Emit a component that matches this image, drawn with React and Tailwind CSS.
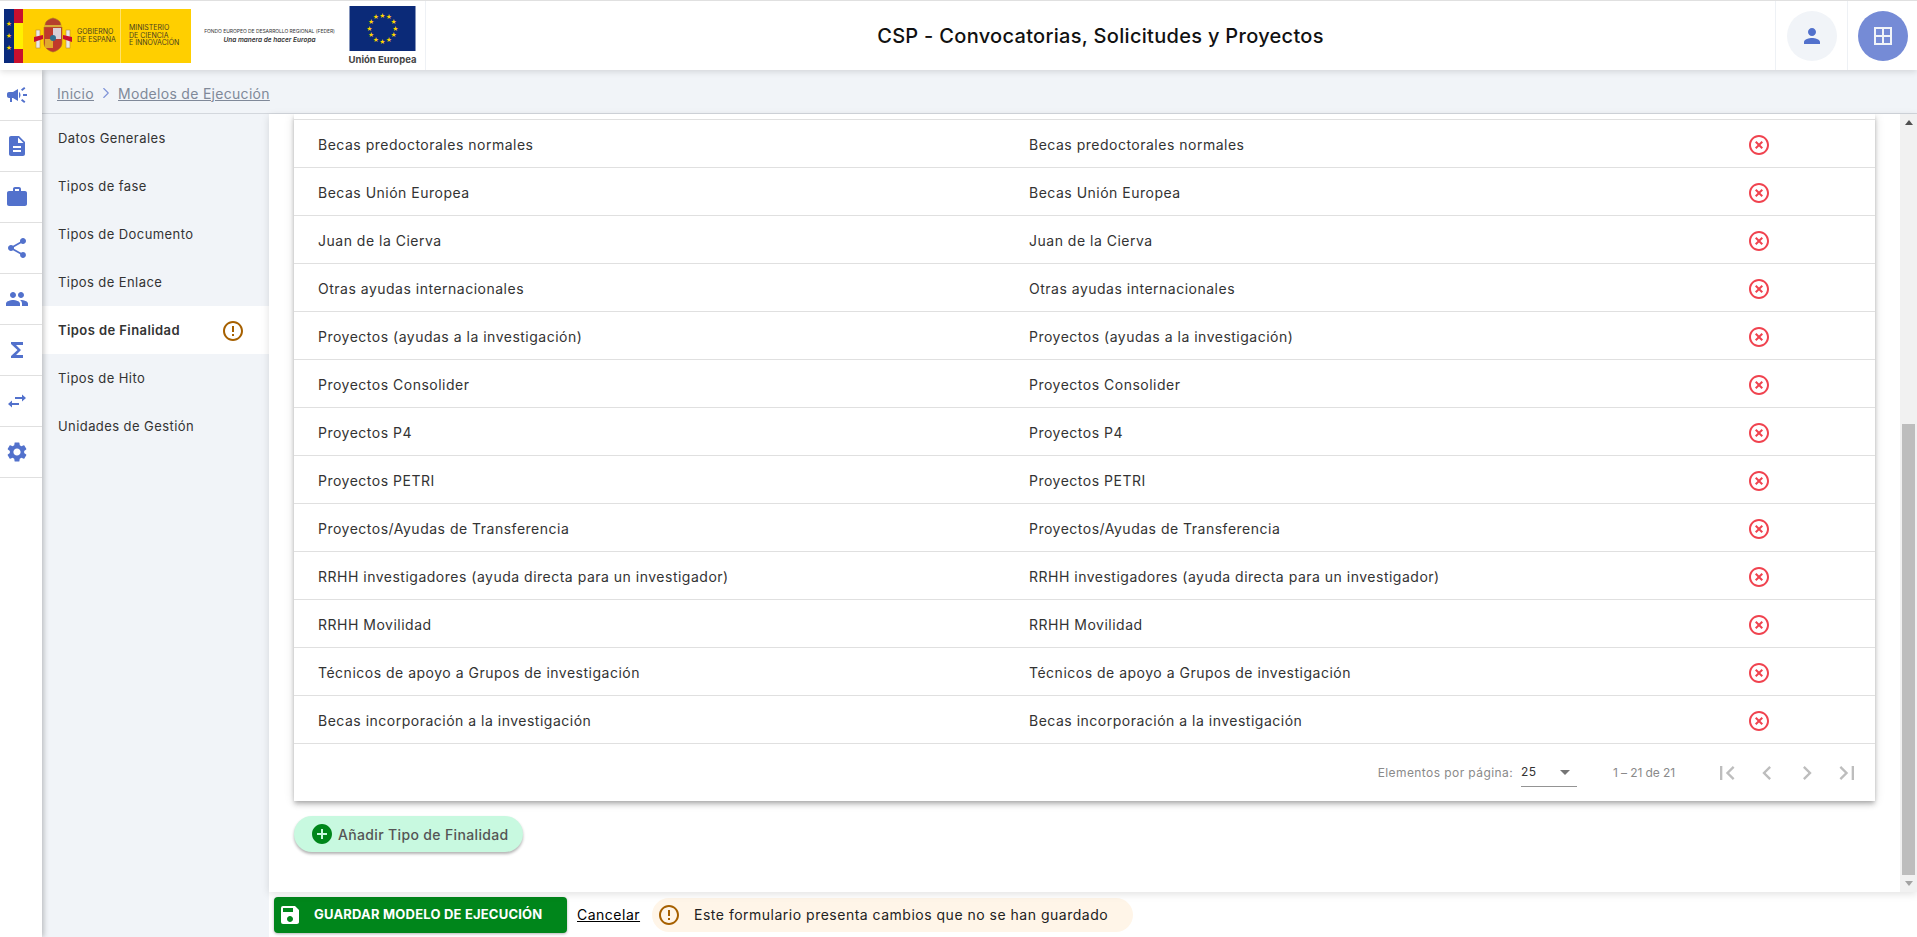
import {
  MdCampaign, MdDescription, MdWork, MdShare, MdPeople, MdFunctions, MdSettings,
  MdPerson, MdBorderAll, MdErrorOutline, MdHighlightOff, MdAddCircle, MdSave,
  MdFirstPage, MdChevronLeft, MdChevronRight, MdLastPage, MdArrowDropDown,
} from 'react-icons/md'
import { LuChevronRight } from 'react-icons/lu'

const SwapIcon = ({ size, className }) => (
  <svg width={size} height={size} viewBox="0 0 24 24" fill="currentColor" className={className}>
    <path d="M10 8h7V5.5L21 9l-4 3.5V10h-7z" />
    <path d="M14 14H7v-2.5L3 15l4 3.5V16h7z" />
  </svg>
)

const railIcons = [MdCampaign, MdDescription, MdWork, MdShare, MdPeople, MdFunctions, SwapIcon, MdSettings]

const subMenu = ['Datos Generales', 'Tipos de fase', 'Tipos de Documento', 'Tipos de Enlace', 'Tipos de Finalidad', 'Tipos de Hito', 'Unidades de Gestión']

const rows = [
  'Becas predoctorales normales',
  'Becas Unión Europea',
  'Juan de la Cierva',
  'Otras ayudas internacionales',
  'Proyectos (ayudas a la investigación)',
  'Proyectos Consolider',
  'Proyectos P4',
  'Proyectos PETRI',
  'Proyectos/Ayudas de Transferencia',
  'RRHH investigadores (ayuda directa para un investigador)',
  'RRHH Movilidad',
  'Técnicos de apoyo a Grupos de investigación',
  'Becas incorporación a la investigación',
]

const euStars = Array.from({ length: 12 }, (_, i) => {
  const a = (i * Math.PI) / 6
  return { x: 33 + 13 * Math.sin(a), y: 22.5 - 13 * Math.cos(a) }
})

const SpainShield = () => (
  <svg width="40" height="38" viewBox="0 0 40 38">
    <rect x="3" y="13" width="4" height="18" fill="#e8e8e8" stroke="#b98a3a" strokeWidth="0.6" />
    <rect x="33" y="13" width="4" height="18" fill="#e8e8e8" stroke="#b98a3a" strokeWidth="0.6" />
    <path d="M1 20 L10 18 L10 22 L1 25 Z M39 20 L30 18 L30 22 L39 25 Z" fill="#c8102e" />
    <path d="M11 10 H29 V26 C29 31 24 34 20 35 C16 34 11 31 11 26 Z" fill="#c0392b" stroke="#a87a2a" strokeWidth="0.6" />
    <rect x="20" y="11" width="8" height="11" fill="#d9cfd6" />
    <rect x="12" y="22" width="8" height="9" fill="#e0a82e" />
    <circle cx="20" cy="21" r="3" fill="#2f6f8f" />
    <path d="M12 9 C12 3 17 2 20 1 C23 2 28 3 28 9 Z" fill="#b5402d" stroke="#a87a2a" strokeWidth="0.6" />
    <rect x="12" y="8" width="16" height="2" fill="#d8a93a" />
  </svg>
)

const Logos = () => (
  <div className="w-[426px] h-full shrink-0 flex items-center border-r border-[#eef1f5]">
    <div className="ml-[4px] w-[187px] h-[54px] flex bg-[#ffcf00]">
      <div className="w-[10px] bg-[#0a2a7c] flex flex-col items-center justify-center gap-[6px] text-[6px] leading-[6px] text-[#ffcf00]">
        <span>★</span><span>★</span><span>★</span>
      </div>
      <div className="w-[9px] flex flex-col">
        <div className="h-[14px] bg-[#c8102e]" />
        <div className="flex-1 bg-[#fff000]" />
        <div className="h-[14px] bg-[#c8102e]" />
      </div>
      <div className="w-[98px] flex items-center border-r border-[#ffe26a]">
        <div className="ml-[10px] w-[40px]"><SpainShield /></div>
        <div className="ml-[4px] text-[7px] leading-[7.5px] text-[#4a4020] whitespace-nowrap">GOBIERNO<br />DE ESPAÑA</div>
      </div>
      <div className="ml-[8px] text-[7px] leading-[7.5px] text-[#4a4020] self-center whitespace-nowrap">MINISTERIO<br />DE CIENCIA<br />E INNOVACIÓN</div>
    </div>
    <div className="ml-[11px] w-[135px] text-center whitespace-nowrap text-[#333]">
      <div className="text-[5px] leading-[9px] tracking-[-0.05px]">FONDO EUROPEO DE DESARROLLO REGIONAL (FEDER)</div>
      <div className="text-[6.5px] leading-[8px] italic font-semibold">Una manera de hacer Europa</div>
    </div>
    <div className="ml-[12px] w-[67px] flex flex-col items-center">
      <svg width="67" height="45" viewBox="0 0 66 45" className="shrink-0">
        <rect width="66" height="45" fill="#0b2a78" />
        {euStars.map((s, i) => (
          <text key={i} x={s.x} y={s.y + 2} textAnchor="middle" fontSize="6" fill="#ffd400">★</text>
        ))}
      </svg>
      <div className="mt-[3px] text-[9.5px] leading-[12px] font-bold text-[#444] whitespace-nowrap">Unión Europea</div>
    </div>
  </div>
)

const Header = () => (
  <header className="relative z-30 h-[70px] shrink-0 flex items-center bg-white border-t border-[#e0e0e0] shadow-[0_2px_6px_rgba(0,0,0,0.12)]">
    <Logos />
    <h1 className="flex-1 text-center text-[20px] font-medium tracking-[0.3px] text-[#111]">CSP - Convocatorias, Solicitudes y Proyectos</h1>
    <div className="w-[72px] h-full flex items-center justify-center border-l border-[#eef1f5]">
      <div className="w-[50px] h-[50px] rounded-full bg-[#f1f4f8] flex items-center justify-center">
        <MdPerson size={24} className="text-[#5271cc]" />
      </div>
    </div>
    <div className="w-[70px] h-full flex items-center justify-center border-l border-[#eef1f5]">
      <div className="w-[50px] h-[50px] rounded-full bg-[#758bd6] flex items-center justify-center">
        <MdBorderAll size={24} className="text-[#f1f4f8]" />
      </div>
    </div>
  </header>
)

const Rail = () => (
  <nav className="relative z-20 w-[42px] shrink-0 bg-white shadow-[2px_0_5px_rgba(0,0,0,0.22)]">
    {railIcons.map((Icon, i) => (
      <div key={i} className="h-[51px] flex items-center justify-center pr-[8px] border-b border-[#e0e0e0]">
        <Icon size={24} className="text-[#5271cc]" />
      </div>
    ))}
  </nav>
)

const Breadcrumb = () => (
  <div className="h-[44px] shrink-0 flex items-center pl-[15px] pt-[3px] bg-[#f1f4f8] border-b border-[#d3d7dd] text-[14px] tracking-[0.3px] text-[#808999]">
    <a className="underline">Inicio</a>
    <LuChevronRight size={18} strokeWidth={1.5} className="mx-[3px] text-[#7f93d8]" />
    <a className="underline">Modelos de Ejecución</a>
  </div>
)

const SubMenu = () => (
  <aside className="w-[227px] shrink-0 bg-[#f1f4f8]">
    {subMenu.map((item, i) => (
      <div
        key={item}
        className={`h-[48px] flex items-center pl-[16px] pt-[1px] text-[13px] tracking-[0.42px] text-[#333] ${i === 4 ? 'bg-white font-semibold text-[#222]' : ''}`}
      >
        <span className="w-[163px]">{item}</span>
        {i === 4 && <MdErrorOutline size={24} className="text-[#a66000]" />}
      </div>
    ))}
  </aside>
)

const Paginator = () => (
  <div className="h-[57px] flex items-center justify-end pr-[8px] text-[12px] tracking-[0.42px] text-[#8a8a8a]">
    <span>Elementos por página:</span>
    <div className="ml-[8px] w-[56px] h-[28px] flex items-center justify-between border-b border-[#949494] text-[#333]">
      <span>25</span>
      <MdArrowDropDown size={24} className="text-[#757575]" />
    </div>
    <span className="ml-[36px] mr-[32px] tracking-[-0.1px]">1 – 21 de 21</span>
    {[MdFirstPage, MdChevronLeft, MdChevronRight, MdLastPage].map((Icon, i) => (
      <div key={i} className="w-[40px] h-[40px] flex items-center justify-center">
        <Icon size={28} className="text-[#bdbdbd]" />
      </div>
    ))}
  </div>
)

const Table = () => (
  <div className="mx-[25px] bg-white shadow-[0_2px_4px_-1px_rgba(0,0,0,0.2),0_4px_5px_rgba(0,0,0,0.14),0_1px_10px_rgba(0,0,0,0.12)]">
    <div className="h-[5px]" />
    {rows.map((name, i) => (
      <div key={i} className="h-[48px] flex items-center border-t border-[#e0e0e0] pl-[24px] text-[14px] tracking-[0.5px] text-[#333]">
        <span className="w-[711px] pt-[1px]">{name}</span>
        <span className="w-[718px] pt-[1px]">{name}</span>
        <MdHighlightOff size={24} className="mt-[2px] text-[#f0434f]" />
      </div>
    ))}
    <div className="border-t border-[#e0e0e0]">
      <Paginator />
    </div>
  </div>
)

const Scrollbar = () => (
  <div className="w-[17px] shrink-0 flex flex-col bg-[#f1f1f1]">
    <div className="h-[17px] flex items-center justify-center">
      <div className="w-0 h-0 border-x-[4px] border-x-transparent border-b-[5px] border-b-[#505050]" />
    </div>
    <div className="flex-1" />
    <div className="h-[451px] mx-[2px] bg-[#bdbdbd]" />
    <div className="h-[17px] flex items-center justify-center">
      <div className="w-0 h-0 border-x-[4px] border-x-transparent border-t-[5px] border-t-[#a3a3a3]" />
    </div>
  </div>
)

const Footer = () => (
  <footer className="h-[45px] shrink-0 flex items-center pl-[5px] bg-white">
    <button className="w-[293px] h-[36px] flex items-center rounded-[4px] bg-[#00861b] text-white text-[13px] font-bold tracking-[0.2px] shadow-[0_1px_3px_rgba(0,0,0,0.3)]">
      <MdSave size={24} className="ml-[4px]" />
      <span className="ml-[12px] whitespace-nowrap">GUARDAR MODELO DE EJECUCIÓN</span>
    </button>
    <a className="ml-[10px] text-[14px] tracking-[0.5px] text-black underline">Cancelar</a>
    <div className="ml-[12px] w-[481px] h-[34px] flex items-center rounded-full bg-[#fff5e8] text-[14px] tracking-[0.5px] text-[#222]">
      <MdErrorOutline size={24} className="ml-[5px] text-[#a66000]" />
      <span className="ml-[13px] whitespace-nowrap">Este formulario presenta cambios que no se han guardado</span>
    </div>
  </footer>
)

export default function App() {
  return (
    <div className="h-screen overflow-hidden flex flex-col bg-white font-[Inter,sans-serif]">
      <Header />
      <div className="flex-1 min-h-0 flex">
        <Rail />
        <div className="flex-1 min-w-0 flex flex-col bg-[#f1f4f8]">
          <Breadcrumb />
          <div className="flex-1 min-h-0 flex">
            <SubMenu />
            <div className="flex-1 min-w-0 flex flex-col bg-white">
              <div className="relative z-10 h-[778px] shrink-0 flex bg-white shadow-[0_2px_8px_rgba(0,0,0,0.12)]">
                <div className="flex-1 min-w-0 overflow-hidden">
                  <Table />
                  <button className="ml-[25px] mt-[15px] w-[229px] h-[36px] flex items-center rounded-full bg-[#c8f9e0] text-[14px] font-medium tracking-[0.35px] text-[#555] shadow-[0_2px_3px_rgba(0,0,0,0.3)]">
                    <MdAddCircle size={24} className="ml-[16px] text-[#00861b]" />
                    <span className="ml-[4px] whitespace-nowrap">Añadir Tipo de Finalidad</span>
                  </button>
                </div>
                <Scrollbar />
              </div>
              <Footer />
            </div>
          </div>
        </div>
      </div>
    </div>
  )
}
